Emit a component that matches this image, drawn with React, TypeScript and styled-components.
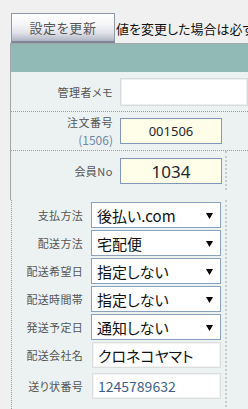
import React from "react";
import styled, { createGlobalStyle } from "styled-components";

const GlobalStyle = createGlobalStyle`
  html, body {
    margin: 0;
    padding: 0;
    background: #f0f0f0;
    overflow: hidden;
  }
  body {
    font-family: "Noto Sans CJK JP", "Noto Sans", sans-serif;
    font-feature-settings: "palt";
  }
`;

const Page = styled.div`
  box-sizing: border-box;
  width: 248px;
  height: 409px;
  overflow: hidden;
  padding: 13px 0 0 10px;
`;

const TopBar = styled.div`
  display: flex;
  align-items: center;
  height: 30px;
  padding-left: 1px;
  white-space: nowrap;
`;

const UpdateButton = styled.button`
  flex: none;
  box-sizing: border-box;
  width: 104px;
  height: 30px;
  padding: 0;
  border: 1px solid #8e99a6;
  border-bottom: 2px solid #7b8798;
  background: linear-gradient(#fefefe 0%, #f6f6f8 40%, #e0e1e9 70%, #aeb5c2 100%);
  font-family: inherit;
  font-feature-settings: "palt";
  font-size: 13px;
  letter-spacing: 0.6px;
  color: #555;
  line-height: 1;
`;

const Notice = styled.span`
  margin-left: 1px;
  font-size: 13px;
  color: #111;
`;

const Panel = styled.div`
  border-top: 1px solid #a3a7a7;
  background: #ecf2f2;
  height: 400px;
`;

const PanelTop = styled.div`
  border-left: 1px solid #a3a7a7;
  padding-bottom: 10px;
`;

const Header = styled.div`
  height: 28px;
  background: #91bab7;
`;

const Row = styled.div<{ $pt: number; $pb: number; $line?: boolean }>`
  display: grid;
  grid-template-columns: 102px 1fr;
  column-gap: 7px;
  align-items: center;
  padding: ${(p) => p.$pt}px 0 ${(p) => p.$pb}px;
  border-bottom: ${(p) => (p.$line ? "1px dotted #9a9a9a" : "none")};
`;

const Label = styled.div`
  text-align: right;
  font-size: 11px;
  line-height: 18px;
  color: #555;
  letter-spacing: 0.5px;
`;

const SubLabel = styled.div`
  font-size: 12px;
  letter-spacing: 0;
  color: #6f86a6;
`;

const MemoInput = styled.div`
  box-sizing: border-box;
  height: 28px;
  background: #fff;
  border: 1px solid #d6dada;
  box-shadow: inset 0 0 0 1px #eef0f0;
`;

const NumberBox = styled.div<{ $size: number }>`
  box-sizing: border-box;
  width: 102px;
  height: 26px;
  background: #fffee9;
  border: 1px solid #8199b8;
  display: flex;
  align-items: center;
  justify-content: center;
  font-size: ${(p) => p.$size}px;
  color: #1d2733;
  font-family: "Noto Sans", "Noto Sans CJK JP", sans-serif;
`;

const MemberCell = styled.div`
  justify-self: start;
  padding: 7px 3px 6px 0;
  border-right: 2px dotted #c7cbcb;
`;

const FormBox = styled.div`
  box-sizing: border-box;
  width: 216px;
  margin-left: 1px;
  padding: 2px 4px 20px 0;
  border-left: 1px dotted #9a9a9a;
  border-right: 2px dotted #c7cbcb;
  display: grid;
  grid-template-columns: 71px 130px;
  column-gap: 8px;
  row-gap: 2px;
  align-items: center;
`;

const FieldLabel = styled.div<{ $mt?: number }>`
  text-align: right;
  font-size: 11px;
  color: #555;
  letter-spacing: 0.3px;
  margin-top: ${(p) => p.$mt ?? 0}px;
`;

const SelectBox = styled.div`
  box-sizing: border-box;
  height: 26px;
  background: #fff;
  border: 1px solid #8aa2c0;
  display: flex;
  align-items: center;
  justify-content: space-between;
  padding: 0 7px 0 5px;
  font-size: 15px;
  color: #111;
`;

const TextBox = styled.div<{ $blue?: boolean; $mt?: number }>`
  box-sizing: border-box;
  height: 26px;
  margin-left: 1px;
  margin-top: ${(p) => p.$mt ?? 0}px;
  background: #fff;
  border: 1px solid #dcdede;
  box-shadow: inset 0 0 0 1px #f1f2f2;
  display: flex;
  align-items: center;
  padding-left: 5px;
  font-size: ${(p) => (p.$blue ? 14 : 15)}px;
  color: ${(p) => (p.$blue ? "#3e5f8c" : "#111")};
`;

const Arrow = () => (
  <svg width="7" height="7" viewBox="0 0 7 7">
    <polygon points="0,1 7,1 3.5,7" fill="#000" />
  </svg>
);

const selects: [string, string][] = [
  ["支払方法", "後払い.com"],
  ["配送方法", "宅配便"],
  ["配送希望日", "指定しない"],
  ["配送時間帯", "指定しない"],
  ["発送予定日", "通知しない"],
];

export default function App() {
  return (
    <>
      <GlobalStyle />
      <Page>
        <TopBar>
          <UpdateButton>設定を更新</UpdateButton>
          <Notice>値を変更した場合は必ず</Notice>
        </TopBar>
        <Panel>
          <PanelTop>
            <Header />
            <Row $pt={6} $pb={5} $line>
              <Label>管理者メモ</Label>
              <MemoInput />
            </Row>
            <Row $pt={1} $pb={1} $line>
              <Label>
                注文番号
                <SubLabel>(1506)</SubLabel>
              </Label>
              <NumberBox $size={13}>001506</NumberBox>
            </Row>
            <Row $pt={0} $pb={0}>
              <Label>会員No</Label>
              <MemberCell>
                <NumberBox $size={17}>1034</NumberBox>
              </MemberCell>
            </Row>
          </PanelTop>
          <FormBox>
            {selects.map(([label, value]) => (
              <React.Fragment key={label}>
                <FieldLabel>{label}</FieldLabel>
                <SelectBox>
                  <span>{value}</span>
                  <Arrow />
                </SelectBox>
              </React.Fragment>
            ))}
            <FieldLabel>配送会社名</FieldLabel>
            <TextBox>クロネコヤマト</TextBox>
            <FieldLabel $mt={3}>送り状番号</FieldLabel>
            <TextBox $blue $mt={3}>1245789632</TextBox>
          </FormBox>
        </Panel>
      </Page>
    </>
  );
}
